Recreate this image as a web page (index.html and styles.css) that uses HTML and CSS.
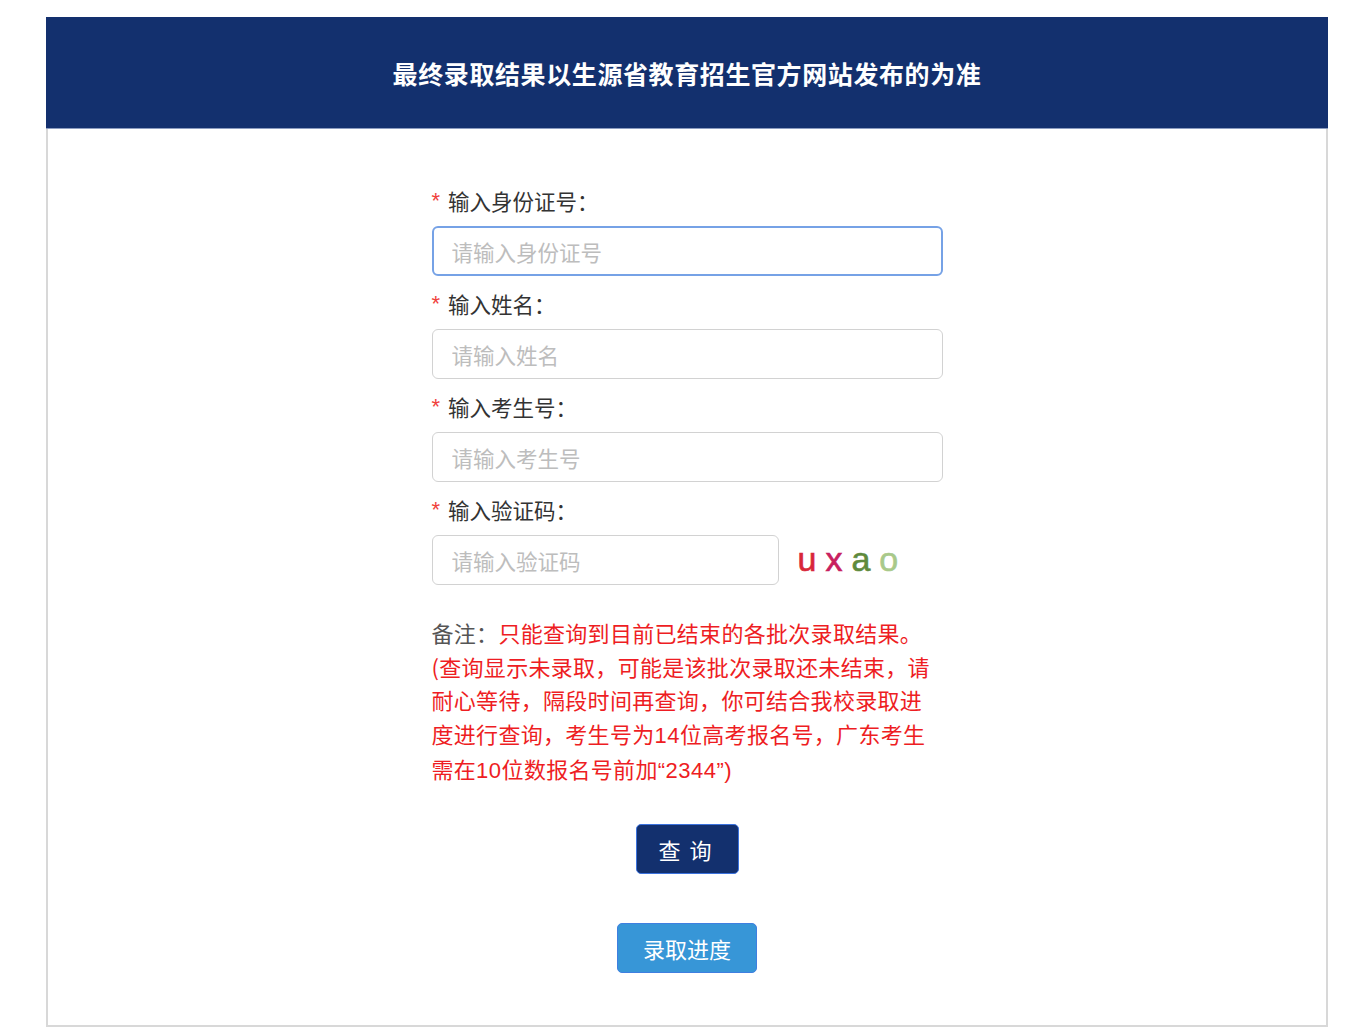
FILE: index.html
```html
<!DOCTYPE html>
<html lang="zh-CN">
<head>
  <meta charset="UTF-8">
  <meta name="viewport" content="width=device-width, initial-scale=1.0">
  <title>录取查询</title>
  <link rel="stylesheet" href="styles.css">
</head>
<body>
  <div class="wrap">
    <header>
      <h1>最终录取结果以生源省教育招生官方网站发布的为准</h1>
    </header>

    <div class="box">
      <form class="form" onsubmit="return false;">
        <div class="field">
          <label for="idcard"><span class="req">*</span>输入身份证号：</label>
          <input id="idcard" class="focus" type="text" placeholder="请输入身份证号">
        </div>
        <div class="field">
          <label for="name"><span class="req">*</span>输入姓名：</label>
          <input id="name" type="text" placeholder="请输入姓名">
        </div>
        <div class="field">
          <label for="ksh"><span class="req">*</span>输入考生号：</label>
          <input id="ksh" type="text" placeholder="请输入考生号">
        </div>
        <div class="field">
          <label for="code"><span class="req">*</span>输入验证码：</label>
          <div class="code-row">
            <input id="code" type="text" placeholder="请输入验证码">
            <div class="captcha"><span class="c1">u</span><span class="c2">x</span><span class="c3">a</span><span class="c4">o</span></div>
          </div>
        </div>

        <p class="note"><span class="note-label">备注：</span><span class="note-red">只能查询到目前已结束的各批次录取结果。<br>(查询显示未录取，可能是该批次录取还未结束，请<br>耐心等待，隔段时间再查询，你可结合我校录取进<br>度进行查询，考生号为<span class="num">14</span>位高考报名号，广东考生<br>需在<span class="num">10</span>位数报名号前加<span class="latin">“2344”)</span></span></p>

        <button class="btn-query" type="submit">查 询</button>
        <button class="btn-progress" type="button">录取进度</button>
      </form>
    </div>
  </div>
</body>
</html>
```

FILE: styles.css
```css
body {
  font-family: "Noto Sans CJK SC", "Noto Sans", sans-serif;
  background: #fff;
  margin: 0;
  padding: 17px 0 0 46px;
  color: #333;
}
.wrap {
  width: 1282px;
}
header {
  background-color: #13306e;
  border-bottom: 1px solid #8c9cc0;
  height: 111px;
  display: flex;
  align-items: center;
  justify-content: center;
}
header h1 {
  margin: 0;
  color: #fff;
  font-size: 25px;
  font-weight: bold;
  letter-spacing: 0.6px;
}
.box {
  border: 2px solid #d8d8d8;
  border-top: none;
  height: 898px;
  box-sizing: border-box;
}
.form {
  width: 511px;
  margin: 0 auto;
  padding-top: 58px;
  display: flex;
  flex-direction: column;
}
.field {
  margin-bottom: 14px;
}
.field label {
  display: flex;
  align-items: center;
  height: 26px;
  font-size: 21.5px;
  margin-bottom: 13px;
  color: #333;
}
.req {
  color: #f0413c;
  font-family: "Liberation Sans", Arial, sans-serif;
  font-size: 22px;
  margin-right: 8px;
  position: relative;
  top: 1px;
}
.field input {
  display: block;
  width: 100%;
  height: 50px;
  box-sizing: border-box;
  border: 1px solid #d2d2d2;
  border-radius: 6px;
  padding: 0 19px;
  font-family: inherit;
  font-size: 21.5px;
  color: #333;
  outline: none;
}
.field input::placeholder {
  color: #bdbdbd;
}
.field input.focus {
  border: 2px solid #76a2e6;
  padding: 0 18px;
}
.code-row {
  display: flex;
  align-items: center;
}
.code-row input {
  width: 347px;
}
.captcha {
  margin-left: 19px;
  font-family: "Liberation Sans", Arial, sans-serif;
  font-size: 34px;
  letter-spacing: 9px;
  line-height: 1;
  padding-bottom: 2px;
  -webkit-text-stroke: 0.6px;
}
.c1 { color: #d8263a; }
.c2 { color: #c8205f; }
.c3 { color: #5e8a3c; }
.c4 { color: #a9c98a; }
.note {
  margin: 17px 0 0;
  font-size: 22px;
  line-height: 33.5px;
  white-space: nowrap;
  letter-spacing: 0.3px;
}
.note-label {
  color: #555;
}
.note-red {
  color: #ee1d23;
}
.num,
.latin {
  font-family: "Liberation Sans", Arial, sans-serif;
  letter-spacing: 0.5px;
}
.form button {
  align-self: center;
  height: 50px;
  border-radius: 5px;
  color: #fff;
  font-family: inherit;
  font-size: 22px;
  cursor: pointer;
}
.btn-query {
  margin-top: 36px;
  width: 103px;
  background: #13306e;
  border: 1px solid #3b72dd;
  letter-spacing: 2px;
  padding-left: 4px;
}
.btn-progress {
  margin-top: 49px;
  width: 140px;
  background: #3796d7;
  border: 1px solid #3f7fe0;
}
```
